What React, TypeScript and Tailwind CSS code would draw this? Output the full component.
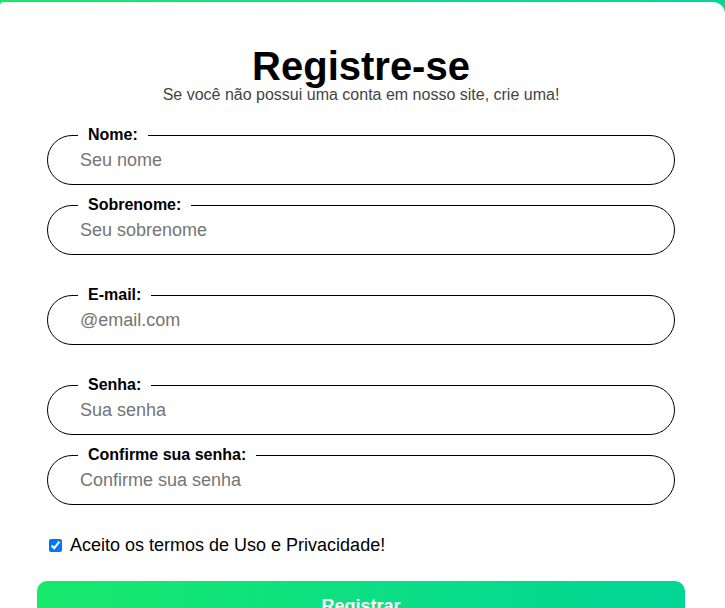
import { useState } from "react";

const fields = [
  { label: "Nome:", placeholder: "Seu nome", type: "text", gap: "mt-[21px]" },
  { label: "Sobrenome:", placeholder: "Seu sobrenome", type: "text", gap: "mt-[10px]" },
  { label: "E-mail:", placeholder: "@email.com", type: "email", gap: "mt-[30px]" },
  { label: "Senha:", placeholder: "Sua senha", type: "password", gap: "mt-[30px]" },
  { label: "Confirme sua senha:", placeholder: "Confirme sua senha", type: "password", gap: "mt-[10px]" },
];

const Field = ({ label, placeholder, type, gap }: (typeof fields)[number]) => {
  return (
    <fieldset className={`${gap} mx-[10px] rounded-full border border-black pl-[30px] pr-[30px]`}>
      <legend className="px-[10px] text-[16px] leading-[20px] font-bold text-black">{label}</legend>
      <input
        type={type}
        placeholder={placeholder}
        className="-mt-[9px] block h-[48px] w-full bg-transparent px-[2px] text-[18px] text-black outline-none placeholder:text-[#757575]"
      />
    </fieldset>
  );
};

export default function App() {
  const [accepted, setAccepted] = useState<boolean>(true);

  return (
    <div className="h-[608px] overflow-hidden bg-gradient-to-r from-[#18e86a] to-[#04d69a] pt-[2px] font-['Liberation_Sans',Arial,sans-serif]">
      <div className="h-full rounded-tl-[4px] rounded-tr-[12px] bg-white pt-[44px]">
        <form className="ml-[37px] w-[648px]" onSubmit={(e) => e.preventDefault()}>
          <h1 className="text-center text-[40px] leading-[40px] font-bold text-black">Registre-se</h1>
          <p className="text-center text-[16px] leading-[18px] text-[#444]">
            Se você não possui uma conta em nosso site, crie uma!
          </p>

          {fields.map((f) => (
            <Field key={f.label} {...f} />
          ))}

          <label className="mt-[30px] ml-[12px] flex items-center gap-[8px] text-[18px] leading-[21px] text-black">
            <input
              type="checkbox"
              checked={accepted}
              onChange={(e) => setAccepted(e.target.checked)}
              className="h-[13px] w-[13px]"
            />
            Aceito os termos de Uso e Privacidade!
          </label>

          <button
            type="submit"
            className="mt-[25px] h-[50px] w-full rounded-[10px] bg-gradient-to-r from-[#17e96b] to-[#03d596] text-[18px] font-bold text-white"
          >
            Registrar
          </button>
        </form>
      </div>
    </div>
  );
}
